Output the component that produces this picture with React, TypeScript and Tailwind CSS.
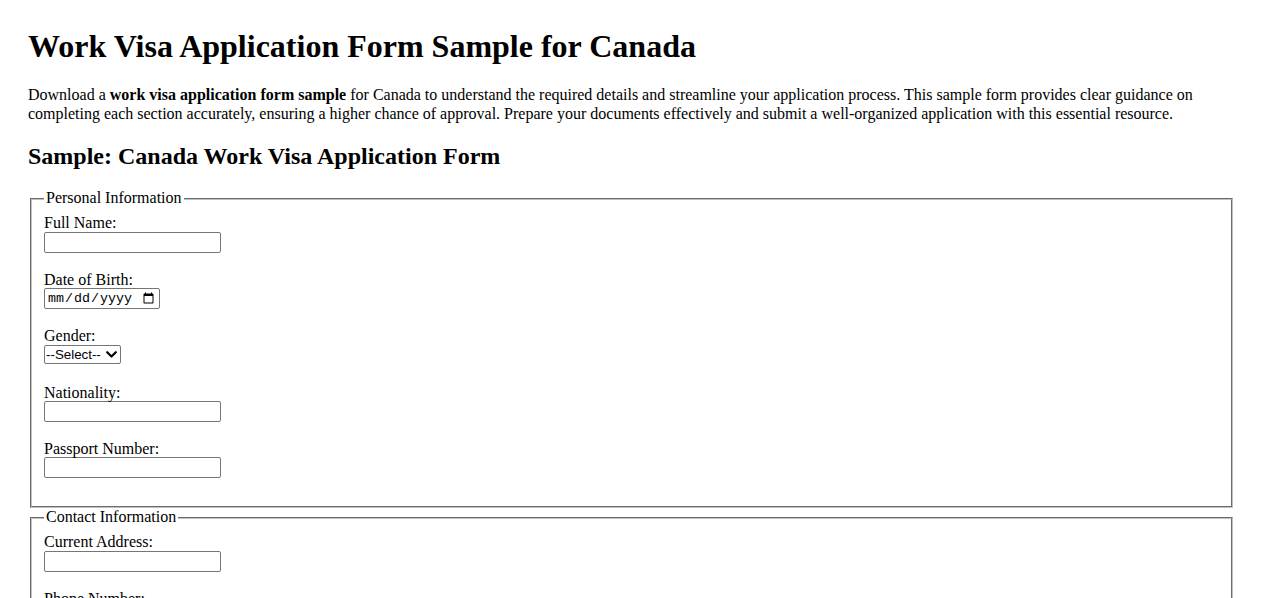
type Field = {
  label: string;
  kind: "text" | "date" | "select" | "email" | "tel";
  options?: string[];
};

const sections: { legend: string; fields: Field[]; padBottom: string }[] = [
  {
    legend: "Personal Information",
    padBottom: "pb-[9px]",
    fields: [
      { label: "Full Name:", kind: "text" },
      { label: "Date of Birth:", kind: "date" },
      { label: "Gender:", kind: "select", options: ["--Select--", "Male", "Female", "Other"] },
      { label: "Nationality:", kind: "text" },
      { label: "Passport Number:", kind: "text" },
    ],
  },
  {
    legend: "Contact Information",
    padBottom: "pb-[10px]",
    fields: [
      { label: "Current Address:", kind: "text" },
      { label: "Phone Number:", kind: "tel" },
      { label: "Email Address:", kind: "email" },
    ],
  },
];

const inputCls =
  "block h-[21px] border border-[#767676] rounded-[2px] bg-white px-[2px] py-[1px] text-[13.333px] font-['Arial','Liberation_Sans',sans-serif] text-black";

function FormField({ field }: { field: Field }) {
  let control;
  if (field.kind === "date") {
    control = (
      <input
        type="date"
        className={`${inputCls} w-[116px] font-['Liberation_Mono','DejaVu_Sans_Mono',monospace]`}
      />
    );
  } else if (field.kind === "select") {
    // custom select so it draws the same everywhere
    control = (
      <div className="relative w-[77px] h-[19px]">
        <select className="block w-full h-full appearance-none border border-[#767676] rounded-[2px] bg-white pl-[1px] text-[13.333px] font-['Arial','Liberation_Sans',sans-serif] text-black leading-[17px]">
          {field.options?.map((o) => (
            <option key={o}>{o}</option>
          ))}
        </select>
        <svg
          className="pointer-events-none absolute right-[4px] top-[6px]"
          width="11"
          height="7"
          viewBox="0 0 11 7"
          fill="none"
        >
          <path d="M1.2 1.2 L5.5 5.5 L9.8 1.2" stroke="black" strokeWidth="2.2" strokeLinecap="round" strokeLinejoin="round" />
        </svg>
      </div>
    );
  } else {
    control = <input type={field.kind} className={`${inputCls} w-[177px]`} />;
  }

  return (
    <div>
      <label className="block leading-[16.4px]">{field.label}</label>
      {control}
      <div className={field.kind === "select" ? "h-[21px]" : "h-[19px]"} />
    </div>
  );
}

export default function App() {
  return (
    <div className="min-h-screen bg-white text-black font-['Liberation_Serif','Times_New_Roman',serif] text-[16px] px-[28px] pt-[28px] pb-[28px]">
      <h1 className="text-[32px] font-bold leading-[36.8px] mb-[21.44px]">
        Work Visa Application Form Sample for Canada
      </h1>
      <p className="leading-[18.4px] mb-[16px]">
        Download a <strong className="font-bold">work visa application form sample</strong> for
        Canada to understand the required details and streamline your application process. This
        sample form provides clear guidance on completing each section accurately, ensuring a
        higher chance of approval. Prepare your documents effectively and submit a well-organized
        application with this essential resource.
      </p>
      <h2 className="text-[24px] font-bold leading-[27.6px] mt-[19.92px] mb-[18.92px]">
        Sample: Canada Work Visa Application Form
      </h2>
      <form>
        {sections.map((s) => (
          <fieldset
            key={s.legend}
            className={`mx-[2px] px-[12px] pt-[7.6px] ${s.padBottom} border-2 [border-style:groove] border-[#c0c0c0]`}
          >
            <legend className="px-[2px] leading-[18.4px]">{s.legend}</legend>
            {s.fields.map((f) => (
              <FormField key={f.label} field={f} />
            ))}
          </fieldset>
        ))}
      </form>
    </div>
  );
}
